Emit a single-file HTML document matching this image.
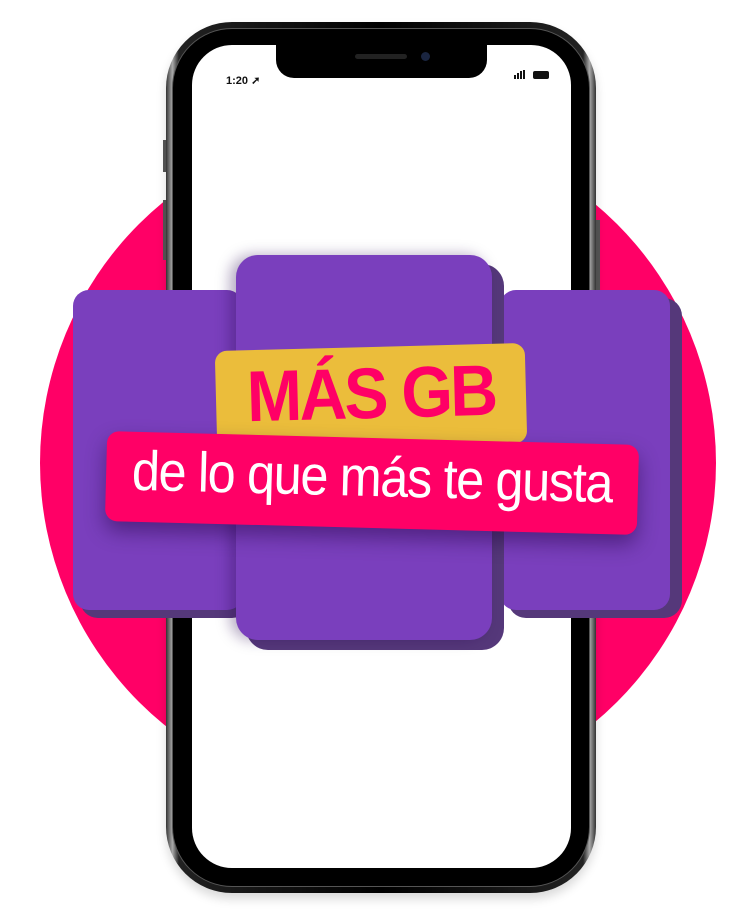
<!DOCTYPE html>
<html><head><meta charset="utf-8"><style>
html,body{margin:0;padding:0;background:#fff;}
body{width:746px;height:915px;position:relative;overflow:hidden;font-family:"Liberation Sans",sans-serif;}
.abs{position:absolute;}
.circle{left:40px;top:125px;width:676px;height:676px;border-radius:50%;background:#ff0066;}
.phone{left:166px;top:22px;width:430px;height:871px;border-radius:66px;background:linear-gradient(90deg,#333,#aaa 1.5%,#222 3%,#000 50%,#222 97%,#aaa 98.5%,#333);box-shadow:0 6px 10px rgba(0,0,0,.15);}
.phone2{left:172px;top:28px;width:418px;height:859px;border-radius:60px;background:#000;border:1px solid #555;box-sizing:border-box;}
.screen{left:192px;top:45px;width:379px;height:823px;border-radius:40px;background:#fff;}
.notch{left:276px;top:45px;width:211px;height:33px;background:#000;border-radius:0 0 18px 18px;}
.spk{left:355px;top:54px;width:52px;height:5px;border-radius:3px;background:#222;}
.cam{left:421px;top:52px;width:9px;height:9px;border-radius:50%;background:#1a2540;}
.btn{background:#555;width:4px;}
.p{background:#7a3fbd;border-radius:18px;}
.sh{background:#55387a;border-radius:18px;}
</style></head><body>
<div class="abs circle"></div>
<div class="abs btn" style="left:163px;top:140px;height:32px"></div>
<div class="abs btn" style="left:163px;top:200px;height:60px"></div>
<div class="abs btn" style="left:596px;top:220px;height:90px"></div>
<div class="abs phone"></div>
<div class="abs phone2"></div>
<div class="abs screen"></div>
<div class="abs notch"></div>
<div class="abs spk"></div>
<div class="abs cam"></div>
<div class="abs" style="left:226px;top:74px;font-size:11px;font-weight:bold;color:#111">1:20 ➚</div>
<div class="abs" style="left:514px;top:75px;width:2px;height:4px;background:#111"></div>
<div class="abs" style="left:517px;top:73px;width:2px;height:6px;background:#111"></div>
<div class="abs" style="left:520px;top:71px;width:2px;height:8px;background:#111"></div>
<div class="abs" style="left:523px;top:70px;width:2px;height:9px;background:#111"></div>
<div class="abs" style="left:533px;top:71px;width:14px;height:6px;border:1px solid #111;background:#111;border-radius:2px"></div>

<div class="abs sh" style="left:80px;top:298px;width:170px;height:320px"></div>
<div class="abs p" style="left:73px;top:290px;width:170px;height:320px;border-radius:16px"></div>
<div class="abs sh" style="left:508px;top:298px;width:174px;height:320px"></div>
<div class="abs p" style="left:500px;top:290px;width:170px;height:320px;border-radius:16px"></div>
<div class="abs sh" style="left:246px;top:264px;width:258px;height:386px;border-radius:22px"></div>
<div class="abs p" style="left:236px;top:255px;width:256px;height:385px;border-radius:22px;box-shadow:-6px 0 14px rgba(40,10,80,.35)"></div>

<div class="abs" style="left:216px;top:347px;width:310px;height:100px;background:#ebbd3b;border-radius:12px;transform:rotate(-1.5deg)"></div>
<div class="abs" style="left:216px;top:352px;width:310px;text-align:center;font-size:72px;font-weight:bold;color:#ff0066;letter-spacing:-3px;line-height:84px;transform:rotate(-1.5deg) scaleX(0.92)">MÁS GB</div>
<div class="abs" style="left:106px;top:438px;width:532px;height:90px;background:#ff0066;border-radius:12px;transform:rotate(1.5deg);box-shadow:0 10px 20px rgba(30,0,60,.45)"></div>
<div class="abs" style="left:96px;top:440px;width:552px;text-align:center;font-size:56px;color:#fff;line-height:74px;letter-spacing:-1.5px;transform:rotate(1.5deg) scaleX(0.9)">de lo que más te gusta</div>
</body></html>
